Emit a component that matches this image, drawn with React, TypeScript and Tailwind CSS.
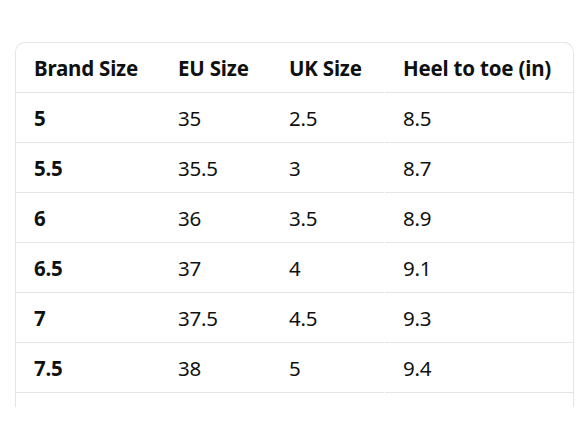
import React from "react";

const rows = [
  ["5", "35", "2.5", "8.5"],
  ["5.5", "35.5", "3", "8.7"],
  ["6", "36", "3.5", "8.9"],
  ["6.5", "37", "4", "9.1"],
  ["7", "37.5", "4.5", "9.3"],
  ["7.5", "38", "5", "9.4"],
];

function Row({ cells, header }: { cells: string[]; header?: boolean }) {
  return (
    <div className="flex h-[50px] shrink-0">
      {cells.map((c, i) => (
        <div
          key={i}
          className={
            (i === 0
              ? "w-[144px] font-bold "
              : i === 1
              ? "w-[111px] "
              : i === 2
              ? "w-[113px] mr-px "
              : "flex-1 ") +
            (header ? "font-bold " : "") +
            "flex items-center pl-[18px] pt-[2px] border-b border-[#e3e6e6]"
          }
        >
          {c}
        </div>
      ))}
    </div>
  );
}

export default function App() {
  return (
    <div className="w-[588px] h-[441px] bg-white pt-[42px] pl-[15px]" style={{ fontFamily: '"Noto Sans", sans-serif' }}>
      <div className="w-[559px] h-[365px] overflow-hidden border border-b-0 border-[#e3e6e6] rounded-t-[10px] flex flex-col text-[20.5px] tracking-[-0.2px] text-[#0f1111]">
        <Row header cells={["Brand Size", "EU Size", "UK Size", "Heel to toe (in)"]} />
        {rows.map((r, i) => (
          <Row key={i} cells={r} />
        ))}
      </div>
    </div>
  );
}
